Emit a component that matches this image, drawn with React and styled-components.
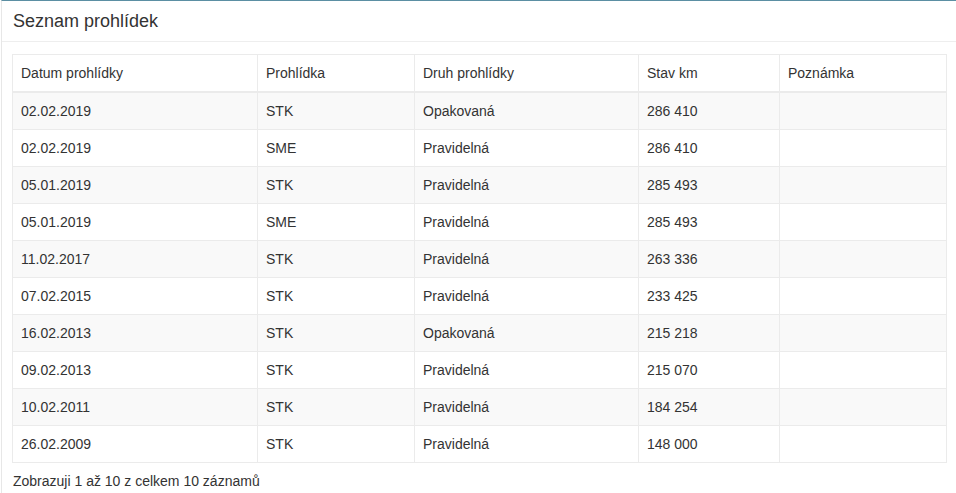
import React from "react";
import styled, { createGlobalStyle } from "styled-components";

const Global = createGlobalStyle`
  html, body { margin: 0; padding: 0; overflow: hidden; background: #fff; }
  body { font-family: "Liberation Sans", Arial, sans-serif; font-size: 14px; color: #333; }
`;

const Panel = styled.section`
  margin-left: 1px;
  width: 957px;
  box-sizing: border-box;
  border: 1px solid #e7e7e7;
  border-top: 1px solid #5b8fa3;
  background: #fff;
`;

const Heading = styled.header`
  padding: 10px 11px;
  border-bottom: 1px solid #eeeeee;
  font-size: 18px;
  line-height: 20px;
  color: #333;
`;

const Body = styled.div`
  padding: 12px 10px 15px 10px;
`;

const Table = styled.table`
  width: 934px;
  border-collapse: collapse;
  table-layout: fixed;
  border: 1px solid #ebebeb;
`;

const HeadCell = styled.th`
  text-align: left;
  font-weight: normal;
  padding: 8px;
  line-height: 20px;
  border: 1px solid #ebebeb;
  border-bottom: 2px solid #ebebeb;
`;

const Row = styled.tr`
  background: ${(p) => (p.$odd ? "#f9f9f9" : "#fff")};
`;

const Cell = styled.td`
  padding: 8px;
  line-height: 20px;
  border: 1px solid #ebebeb;
`;

const Info = styled.div`
  padding-top: 8px;
  line-height: 20px;
  padding-left: 1px;
`;

const cols = [245, 157, 224, 141, 167];
const heads = ["Datum prohlídky", "Prohlídka", "Druh prohlídky", "Stav km", "Poznámka"];
const rows = [
  ["02.02.2019", "STK", "Opakovaná", "286 410", ""],
  ["02.02.2019", "SME", "Pravidelná", "286 410", ""],
  ["05.01.2019", "STK", "Pravidelná", "285 493", ""],
  ["05.01.2019", "SME", "Pravidelná", "285 493", ""],
  ["11.02.2017", "STK", "Pravidelná", "263 336", ""],
  ["07.02.2015", "STK", "Pravidelná", "233 425", ""],
  ["16.02.2013", "STK", "Opakovaná", "215 218", ""],
  ["09.02.2013", "STK", "Pravidelná", "215 070", ""],
  ["10.02.2011", "STK", "Pravidelná", "184 254", ""],
  ["26.02.2009", "STK", "Pravidelná", "148 000", ""],
];

export default function App() {
  return (
    <>
      <Global />
      <Panel>
        <Heading>Seznam prohlídek</Heading>
        <Body>
          <Table>
            <colgroup>
              {cols.map((w, i) => (
                <col key={i} style={{ width: w }} />
              ))}
            </colgroup>
            <thead>
              <tr>
                {heads.map((h) => (
                  <HeadCell key={h}>{h}</HeadCell>
                ))}
              </tr>
            </thead>
            <tbody>
              {rows.map((r, i) => (
                <Row key={i} $odd={i % 2 === 0}>
                  {r.map((c, j) => (
                    <Cell key={j}>{c}</Cell>
                  ))}
                </Row>
              ))}
            </tbody>
          </Table>
          <Info>Zobrazuji 1 až 10 z celkem 10 záznamů</Info>
        </Body>
      </Panel>
    </>
  );
}
